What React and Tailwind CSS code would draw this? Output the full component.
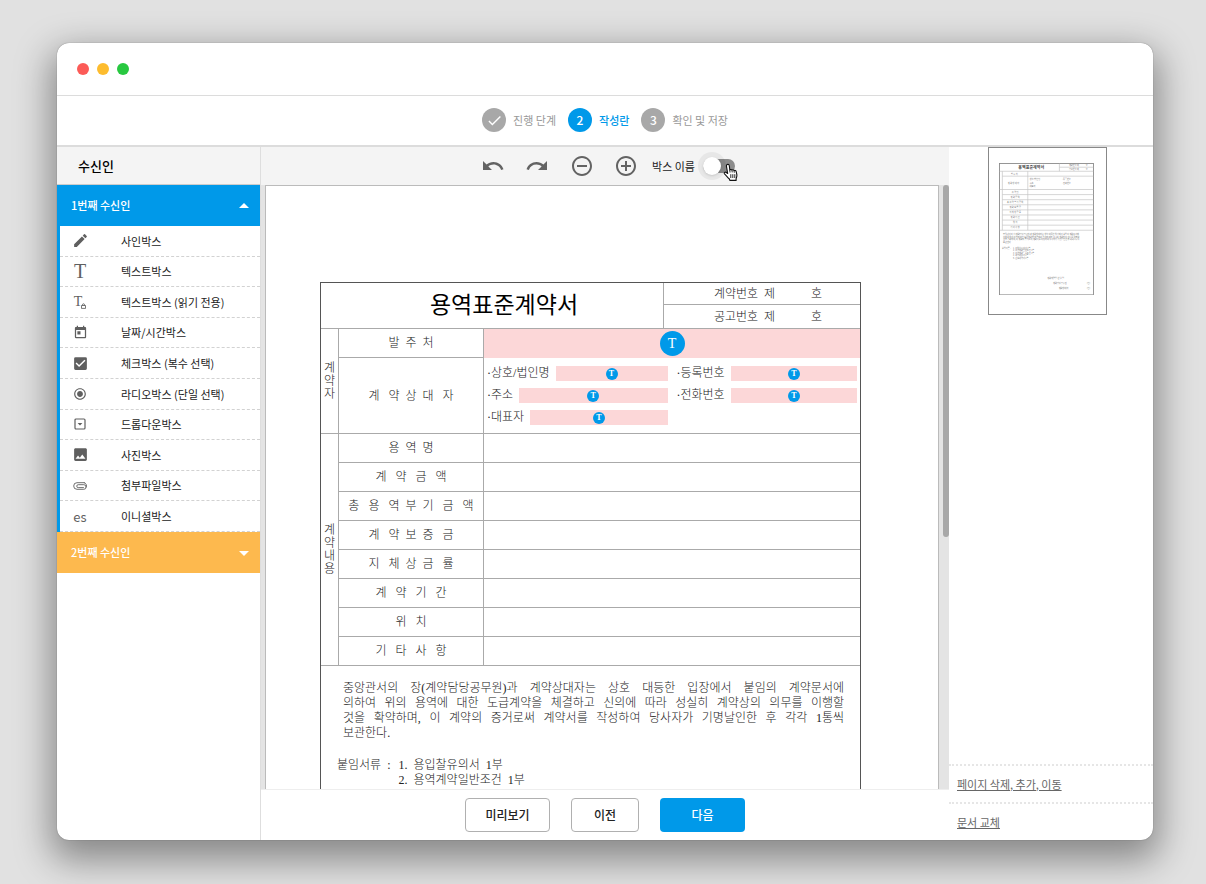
import React, { useState } from 'react';
import {
  MdAddCircleOutline,
  MdArrowDropDown,
  MdArrowDropUp,
  MdCheck,
  MdCheckBox,
  MdCreate,
  MdImage,
  MdRadioButtonChecked,
  MdRedo,
  MdRemoveCircleOutline,
  MdToday,
  MdUndo
} from 'react-icons/md';

const DropdownIcon = () => (
  <svg viewBox="0 0 12 12" className="w-3 h-3" fill="none">
    <rect x="1" y="1" width="10" height="10" rx="1" stroke="currentColor" strokeWidth="1.2" />
    <path d="M3.6 5h4.8L6 7.6z" fill="currentColor" />
  </svg>
);

const ClipIcon = () => (
  <svg viewBox="0 0 14 8" className="w-[14px] h-2" fill="none" stroke="currentColor" strokeWidth="0.9" strokeLinecap="round">
    <path d="M10.5 5.6H5.2a1.4 1.4 0 0 1 0-2.9h5.6a2.3 2.3 0 0 1 0 4.6H4A3.3 3.3 0 0 1 4 .7h7.3" />
    <path d="M11.3.7a3 3 0 0 1 1.9 4.5" />
  </svg>
);

const ReadOnlyTextIcon = () => (
  <span className="relative font-['Liberation_Serif',serif] text-sm leading-none pr-1">
    T
    <svg viewBox="0 0 6 7" className="absolute right-0 bottom-0 w-[5px] h-[6px]" fill="none" stroke="currentColor">
      <rect x="0.7" y="3" width="4.6" height="3.3" />
      <path d="M1.8 3V2a1.2 1.2 0 0 1 2.4 0v1" />
    </svg>
  </span>
);

const HandCursor = () => (
  <svg viewBox="0 0 16 19" className="w-4 h-[19px]">
    <path
      d="M4.2 1.6c.9-.5 2 .1 2.1 1.1l.5 4.2c.5-.7 1.7-.6 2.1.2.7-.6 1.7-.3 2.1.5.8-.5 2 0 2.2 1l.7 3.2c.2 1.5-.3 2.7-.8 3.9v1.7H6.8L6.4 16C4.9 14.6 3.2 12.5 1.5 10.8c-.7-.9.3-2 1.5-1.5l1.7 1.2L3.4 3.1c-.1-.6.2-1.2.8-1.5z"
      fill="#fff"
      stroke="#111"
      strokeWidth="1.1"
      strokeLinejoin="round"
    />
    <path d="M7.8 11.2v3.8M9.8 11.2v3.8M11.8 11.2v3.8M6.8 7l.2 2.5M9 7.2l.2 2.2M11.1 7.8l.2 1.9" stroke="#111" strokeWidth="0.9" />
  </svg>
);

const boxTypes = [
  { label: '사인박스', icon: <MdCreate size={17} /> },
  { label: '텍스트박스', icon: <span className="font-['Liberation_Serif',serif] text-xl leading-none">T</span> },
  { label: '텍스트박스 (읽기 전용)', icon: <ReadOnlyTextIcon /> },
  { label: '날짜/시간박스', icon: <MdToday size={15} /> },
  { label: '체크박스 (복수 선택)', icon: <MdCheckBox size={17} /> },
  { label: '라디오박스 (단일 선택)', icon: <MdRadioButtonChecked size={14} /> },
  { label: '드롭다운박스', icon: <DropdownIcon /> },
  { label: '사진박스', icon: <MdImage size={17} /> },
  { label: '첨부파일박스', icon: <ClipIcon /> },
  { label: '이니셜박스', icon: <span className="text-[13px] leading-none">es</span> }
];

const contractRows = [
  '용  역  명',
  '계   약   금   액',
  '총   용   역  부  기   금   액',
  '계   약  보  증   금',
  '지   체  상  금   률',
  '계   약   기   간',
  '위   치',
  '기   타   사   항'
];

const paragraph = [
  '중앙관서의 장(계약담당공무원)과 계약상대자는 상호 대등한 입장에서 붙임의 계약문서에',
  '의하여 위의 용역에 대한 도급계약을 체결하고 신의에 따라 성실히 계약상의 의무를 이행할',
  '것을 확약하며, 이 계약의 증거로써 계약서를 작성하여 당사자가 기명날인한 후 각각 1통씩'
];

const Step = ({ mark, label, active }) => (
  <li className="flex items-center gap-[7px]">
    <span className={`flex items-center justify-center w-6 h-6 rounded-full text-xs font-medium text-white ${active ? 'bg-[#0099e9]' : 'bg-[#a8a8a8]'}`}>
      {mark}
    </span>
    <span className={`text-[11px] ${active ? 'font-medium text-[#0099e9]' : 'text-[#999]'}`}>{label}</span>
  </li>
);

const Sidebar = () => (
  <aside className="w-[204px] shrink-0 flex flex-col border-r border-[#dedede]">
    <h2 className="h-[38px] shrink-0 flex items-center pl-[21px] bg-[#f4f4f4] text-[13px] font-medium text-black border-b border-[#ccc]">수신인</h2>
    <button className="h-[41px] shrink-0 flex items-center justify-between pl-[14px] pr-1 bg-[#0099e9] text-white text-[11px] font-medium">
      1번째 수신인
      <MdArrowDropUp size={24} />
    </button>
    <ul className="h-[306px] shrink-0 grid auto-rows-fr border-l-[3px] border-[#0099e9]">
      {boxTypes.map((box) => (
        <li key={box.label} className="border-b border-dashed border-[#d2d2d2]">
          <button className="w-full h-full flex items-center text-[11px] text-[#222]">
            <span className="w-[40px] flex justify-center text-[#5f5f5f]">{box.icon}</span>
            <span className="pl-[21px]">{box.label}</span>
          </button>
        </li>
      ))}
    </ul>
    <button className="h-[41px] shrink-0 flex items-center justify-between pl-[14px] pr-1 bg-[#fdb94e] text-white text-[11px] font-medium">
      2번째 수신인
      <MdArrowDropDown size={24} />
    </button>
  </aside>
);

const Toolbar = () => {
  const [showNames, setShowNames] = useState(false);
  return (
    <div className="h-[38px] shrink-0 flex items-center justify-center pl-[6px] bg-[#f4f4f4] text-[#636363]">
      <button aria-label="실행 취소" className="mr-5"><MdUndo size={24} /></button>
      <button aria-label="다시 실행" className="mr-[21px]"><MdRedo size={24} /></button>
      <button aria-label="축소" className="mr-5"><MdRemoveCircleOutline size={24} /></button>
      <button aria-label="확대" className="mr-[14px]"><MdAddCircleOutline size={24} /></button>
      <label htmlFor="box-name" className="text-[11px] text-[#222] mr-2">박스 이름</label>
      <span className="relative w-8 h-[14px] flex">
        <input id="box-name" type="checkbox" checked={showNames} onChange={() => setShowNames(!showNames)}
          className="appearance-none w-full h-full rounded-full bg-[#8c8c8c]" />
        <span className="absolute -left-[5px] -top-[7px] w-7 h-7 rounded-full bg-black/5 pointer-events-none" />
        <span className={`absolute -top-[2px] w-[18px] h-[18px] rounded-full bg-white shadow pointer-events-none ${showNames ? 'right-0' : 'left-0'}`} />
        <span className="absolute left-5 top-1 pointer-events-none"><HandCursor /></span>
      </span>
    </div>
  );
};

const Field = ({ large }) => (
  <button aria-label="텍스트박스" className={`flex-1 flex items-center justify-center bg-[#fcd7d8] ${large ? 'w-full h-[29px]' : 'h-[15px]'}`}>
    <span className={`flex items-center justify-center rounded-full bg-[#0099e9] text-white leading-none ${large ? 'w-[25px] h-[25px] text-sm' : 'w-3 h-3 text-[8px] font-bold'}`}>
      T
    </span>
  </button>
);

const PartyField = ({ label }) => (
  <div className="flex items-center gap-[6px]">
    <span>{label}</span>
    <Field />
  </div>
);

const Contract = () => (
  <div className="ml-[54px] mr-[77px] mt-24 h-[760px] border border-[#555] text-xs text-[#222] font-['Liberation_Serif','Noto_Sans_CJK_KR',serif] font-light">
    <table className="w-full table-fixed border-separate border-spacing-0 text-center leading-[14px] whitespace-pre [&_td]:p-0 [&_th]:p-0 [&_th]:font-light [&_td]:border-b [&_th]:border-b [&_td]:border-[#aaa] [&_th]:border-[#aaa]">
      <colgroup>
        <col className="w-[18px]" />
        <col className="w-[145px]" />
        <col className="w-[180px]" />
        <col />
      </colgroup>
      <tbody>
        <tr>
          <th colSpan={3} rowSpan={2} className="border-r">
            <h1 className="pl-6 text-[23px] leading-8 font-normal text-black">용역표준계약서</h1>
          </th>
          <td className="h-[22px]">
            <span className="pl-3">계약번호  제            호</span>
          </td>
        </tr>
        <tr>
          <td className="h-6">
            <span className="pl-3">공고번호  제            호</span>
          </td>
        </tr>
        <tr>
          <th rowSpan={2} className="border-r leading-[13px]">{'계\n약\n자'}</th>
          <th className="h-[29px] border-r">발  주  처</th>
          <td colSpan={2} className="h-[29px]">
            <div className="flex -mb-px"><Field large /></div>
          </td>
        </tr>
        <tr>
          <th className="border-r">계   약  상  대   자</th>
          <td colSpan={2} className="h-[76px]">
            <div className="grid grid-cols-2 gap-x-[9px] gap-y-[7px] px-[3px] leading-[15px]">
              <PartyField label="·상호/법인명" />
              <PartyField label="·등록번호" />
              <PartyField label="·주소" />
              <PartyField label="·전화번호" />
              <PartyField label="·대표자" />
            </div>
          </td>
        </tr>
        {contractRows.map((row, i) => (
          <tr key={row}>
            {i === 0 && <th rowSpan={contractRows.length} className="border-r leading-[13px]">{'계\n약\n내\n용'}</th>}
            <th className="h-[29px] border-r">{row}</th>
            <td colSpan={2} />
          </tr>
        ))}
      </tbody>
    </table>
    <div className="pl-[22px] pr-4 pt-[15px] leading-[15px]">
      {paragraph.map((line) => (
        <p key={line} className="[text-align-last:justify]">{line}</p>
      ))}
      <p>보관한다.</p>
    </div>
    <div className="flex gap-2 pl-4 pt-[17px] leading-[15px] whitespace-pre">
      <span>붙임서류  :</span>
      <ol>
        <li>1.  용입찰유의서  1부</li>
        <li>2.  용역계약일반조건  1부</li>
      </ol>
    </div>
  </div>
);

const Thumbnail = () => (
  <svg viewBox="0 0 541 754" className="w-full" fill="none" fontFamily="'Noto Sans CJK KR', sans-serif">
    <rect x="3" y="3" width="535" height="748" stroke="#888" strokeWidth="5" />
    <g stroke="#c4c4c4" strokeWidth="4">
      <path d="M344 4v43M344 24h193M4 47h533M19 75h518M4 151h533M19 47v336M164 47v336" />
      {[180, 209, 238, 267, 296, 325, 354].map((y) => <path key={y} d={`M19 ${y}h518`} />)}
      <path d="M4 383h533" />
    </g>
    <g fill="#777" fontSize="12">
      <text x="110" y="33" fontSize="23" fontWeight="bold" fill="#444">용역표준계약서</text>
      <text x="398" y="17">계약번호 제</text>
      <text x="494" y="17">호</text>
      <text x="398" y="40">공고번호 제</text>
      <text x="494" y="40">호</text>
      <text x="68" y="66">발 주 처</text>
      <text x="50" y="118">계 약 상 대 자</text>
      <text x="168" y="95">·상호/법인명</text>
      <text x="358" y="95">·등록번호</text>
      <text x="168" y="117">·주소</text>
      <text x="358" y="117">·전화번호</text>
      <text x="168" y="139">·대표자</text>
      {contractRows.map((row, i) => <text key={row} x="92" y={170 + i * 29} textAnchor="middle">{row}</text>)}
      {paragraph.map((line, i) => <text key={line} x="23" y={410 + i * 15}>{line}</text>)}
      <text x="23" y="455">보관한다.</text>
      <text x="17" y="487">붙임서류 :</text>
      {['1. 용입찰유의서 1부', '2. 용역계약일반조건 1부', '3. 용역계약특수조건 1부', '4. 과업내용서 1부', '5. 산출내역서 1부'].map((line, i) => (
        <text key={line} x="80" y={487 + i * 15}>{line}</text>
      ))}
      <text x="275" y="658">계약체결일  년  월  일</text>
      <text x="308" y="687">계약담당공무원</text>
      <text x="500" y="687">(인)</text>
      <text x="340" y="715">계약상대자</text>
      <text x="500" y="715">(인)</text>
    </g>
  </svg>
);

const PagePanel = () => (
  <aside className="w-[204px] shrink-0 flex flex-col text-[11px] text-[#666]">
    <div className="flex-1">
      <button aria-label="1 페이지" className="block ml-[39px] w-[119px] h-[168px] pl-[10px] pr-3 pb-1 border border-[#888]">
        <Thumbnail />
      </button>
    </div>
    <div className="h-[38px] flex items-center pl-2 border-t-2 border-dotted border-[#e6e6e6]">
      <a href="#pages" className="underline">페이지 삭제, 추가, 이동</a>
    </div>
    <div className="h-[38px] flex items-center pl-2 border-t-2 border-dotted border-[#e6e6e6]">
      <a href="#replace" className="underline">문서 교체</a>
    </div>
  </aside>
);

const App = () => {
  return (
    <div className="h-screen flex flex-col bg-[#e1e1e1] pl-[57px] pr-[53px] pt-[43px] pb-11 overflow-hidden font-['Noto_Sans_CJK_KR',sans-serif]">
      <div className="flex-1 min-h-0 flex flex-col bg-white rounded-xl overflow-hidden shadow-[0_0_1px_#0008,0_14px_36px_6px_#00000066]">
        <header className="h-[53px] shrink-0 flex items-center gap-2 px-5 border-b border-[#dcdcdc]">
          <span className="w-3 h-3 rounded-full bg-[#fc5b57]" />
          <span className="w-3 h-3 rounded-full bg-[#fdbc2e]" />
          <span className="w-3 h-3 rounded-full bg-[#28c840]" />
        </header>
        <ol className="h-[51px] shrink-0 flex items-center justify-center gap-3 pb-px border-b-2 border-[#dcdcdc]">
          <Step mark={<MdCheck size={17} />} label="진행 단계" />
          <Step mark="2" label="작성란" active />
          <Step mark="3" label="확인 및 저장" />
        </ol>
        <div className="flex-1 min-h-0 flex">
          <Sidebar />
          <main className="flex-1 min-w-0 flex flex-col">
            <Toolbar />
            <div className="flex-1 min-h-0 flex bg-[#e4e4e4] pl-1 overflow-hidden">
              <div className="flex-1 bg-white border-x border-t border-[#bbb]">
                <Contract />
              </div>
              <div className="w-[10px] flex justify-end">
                <div className="w-[6px] h-[352px] rounded-full bg-[#a8a8a8]" />
              </div>
            </div>
            <div className="h-[51px] shrink-0 flex items-center justify-center gap-[21px] border-t border-[#eee] text-xs font-medium text-[#222]">
              <button className="w-[85px] h-[34px] rounded border border-[#b0b0b0]">미리보기</button>
              <button className="w-[68px] h-[34px] rounded border border-[#b0b0b0]">이전</button>
              <button className="w-[85px] h-[34px] rounded bg-[#0099e9] text-white">다음</button>
            </div>
          </main>
          <PagePanel />
        </div>
      </div>
    </div>
  );
};

export default App;
